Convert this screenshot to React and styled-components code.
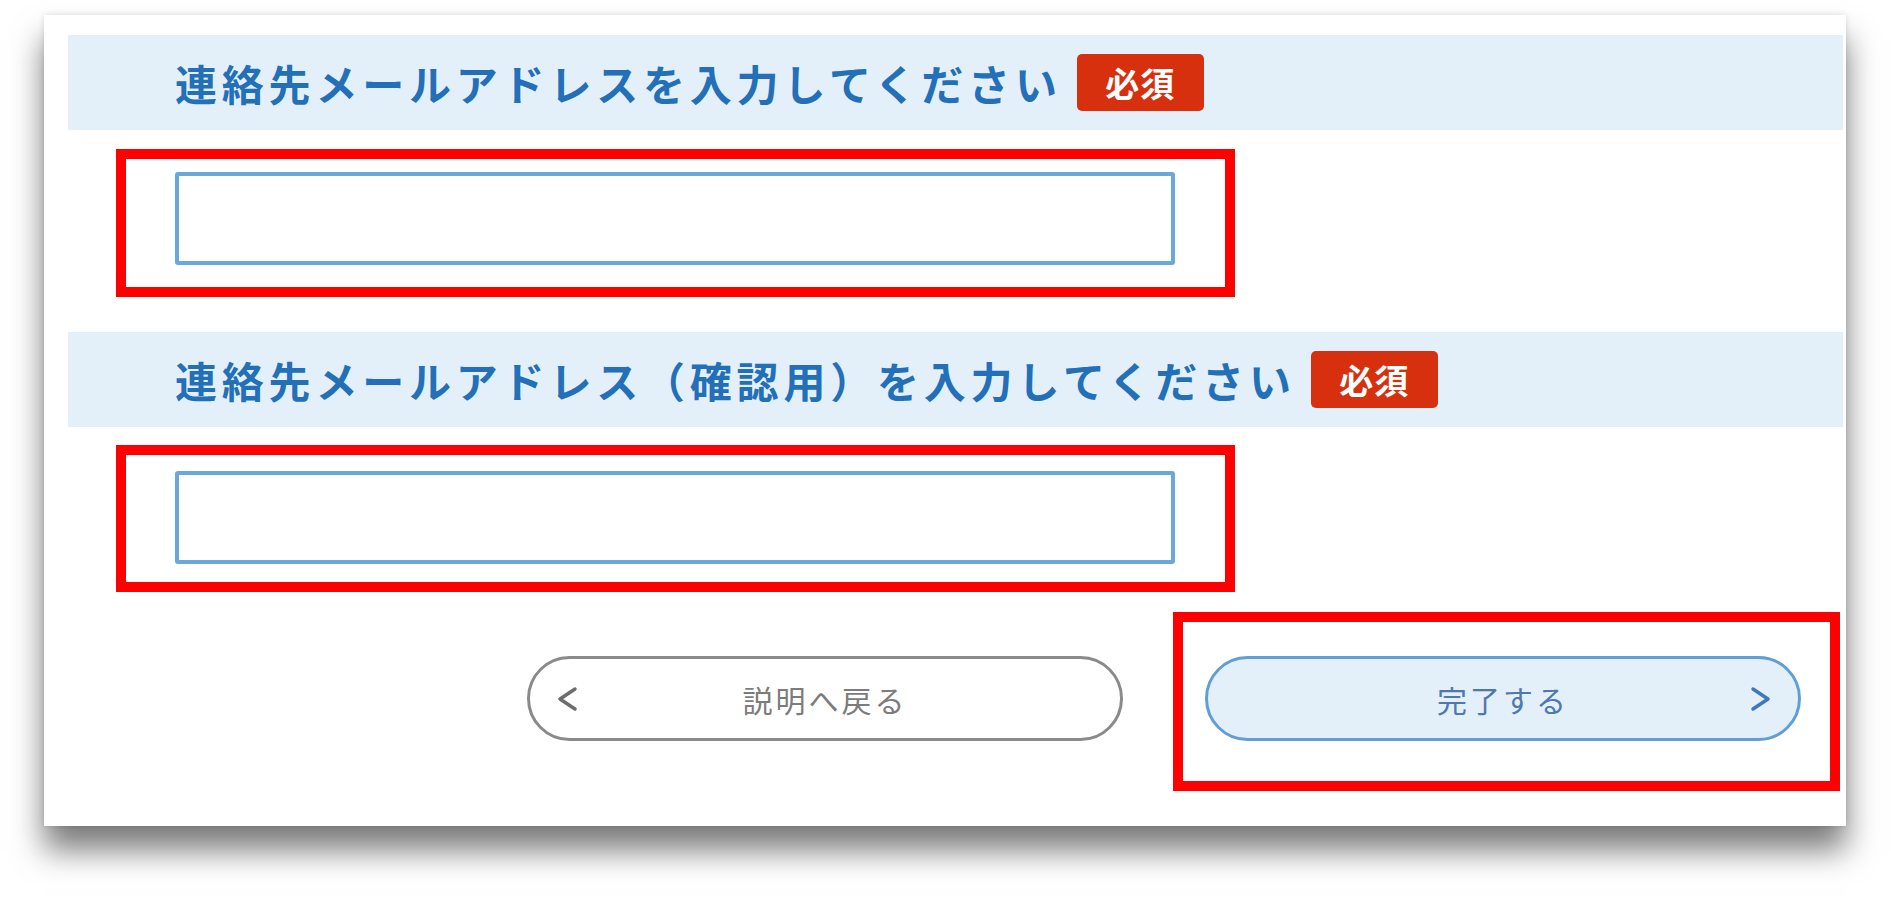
import React from 'react'
import styled, { createGlobalStyle } from "styled-components";

const GlobalStyle = createGlobalStyle`
  body {
    margin: 0;
    background: #ffffff;
    font-family: "Noto Sans CJK JP", "Noto Sans", sans-serif;
  }
`;

const Page = styled.div`
  padding: 15px 0 0 44px;
  width: 1891px;
  height: 904px;
  box-sizing: border-box;
  overflow: hidden;
`;

const Card = styled.div`
  width: 1802px;
  height: 811px;
  box-sizing: border-box;
  background: #ffffff;
  padding: 20px 3px 0 24px;
  box-shadow: 0 24px 30px rgba(0, 0, 0, 0.52), 0 0 6px rgba(0, 0, 0, 0.12);
`;

const Band = styled.div`
  height: 95px;
  background: #e3f0fa;
  display: flex;
  align-items: center;
  gap: 15px;
  padding-left: 107px;
  margin-top: ${p => p.$top || 0}px;
`;

const Title = styled.h2`
  margin: 0;
  font-size: 42px;
  font-weight: 700;
  letter-spacing: 4.8px;
  color: #2370b8;
  line-height: 1;
`;

const Badge = styled.span`
  display: inline-flex;
  align-items: center;
  justify-content: center;
  width: 127px;
  height: 57px;
  border-radius: 5px;
  background: #d7300f;
  color: #ffffff;
  font-size: 34px;
  font-weight: 700;
  letter-spacing: 1px;
`;

const Highlight = styled.div`
  width: 1119px;
  box-sizing: border-box;
  border: 10px solid #ff0000;
  padding: ${p => p.$pad};
  margin: ${p => p.$top}px 0 0 48px;
`;

const Field = styled.input`
  display: block;
  width: 1000px;
  height: 93px;
  box-sizing: border-box;
  border: 4px solid #6aa8dc;
  border-radius: 3px;
  background: #ffffff;
  outline: none;
`;

const Actions = styled.div`
  display: flex;
  align-items: flex-start;
  margin-top: 20px;
  padding-left: 459px;
  gap: 50px;
`;

const Pill = styled.button`
  position: relative;
  width: 596px;
  height: 85px;
  box-sizing: border-box;
  border-radius: 43px;
  border: 3px solid ${p => (p.$primary ? "#5f9fd6" : "#8a8a8a")};
  background: ${p => (p.$primary ? "#e3f0fa" : "#ffffff")};
  color: ${p => (p.$primary ? "#4f78ad" : "#7c7c7c")};
  font-family: "Noto Sans CJK JP", "Noto Sans", sans-serif;
  font-size: 30px;
  letter-spacing: 3px;
  display: flex;
  align-items: center;
  justify-content: center;
  padding: 0;
  margin-top: ${p => p.$top || 0}px;
  cursor: pointer;
`;

const Chevron = styled.svg`
  position: absolute;
  top: 50%;
  transform: translateY(-50%);
  ${p => (p.$right ? "right: 25px;" : "left: 25px;")}
`;

const ButtonBox = styled.div`
  border: 10px solid #ff0000;
  padding: 34px 29px 40px 22px;
`;

const Left = () => (
  <Chevron width="24" height="28" viewBox="0 0 24 28">
    <polyline points="20,4 5,14 20,24" fill="none" stroke="#6d6d6d" strokeWidth="3.5" strokeLinecap="round" strokeLinejoin="round" />
  </Chevron>
);

const Right = () => (
  <Chevron $right width="24" height="28" viewBox="0 0 24 28">
    <polyline points="4,4 19,14 4,24" fill="none" stroke="#3f78bd" strokeWidth="3.5" strokeLinecap="round" strokeLinejoin="round" />
  </Chevron>
);

const App = () => {
  return (
    <Page>
      <GlobalStyle />
      <Card>
        <Band>
          <Title>連絡先メールアドレスを入力してください</Title>
          <Badge>必須</Badge>
        </Band>
        <Highlight $top={19} $pad="13px 0 22px 49px">
          <Field type="email" />
        </Highlight>

        <Band $top={35}>
          <Title>連絡先メールアドレス（確認用）を入力してください</Title>
          <Badge>必須</Badge>
        </Band>
        <Highlight $top={18} $pad="16px 0 18px 49px">
          <Field type="email" />
        </Highlight>

        <Actions>
          <Pill $top={44}>
            <Left />
            説明へ戻る
          </Pill>
          <ButtonBox>
            <Pill $primary>
              完了する
              <Right />
            </Pill>
          </ButtonBox>
        </Actions>
      </Card>
    </Page>
  )
}

export default App;
